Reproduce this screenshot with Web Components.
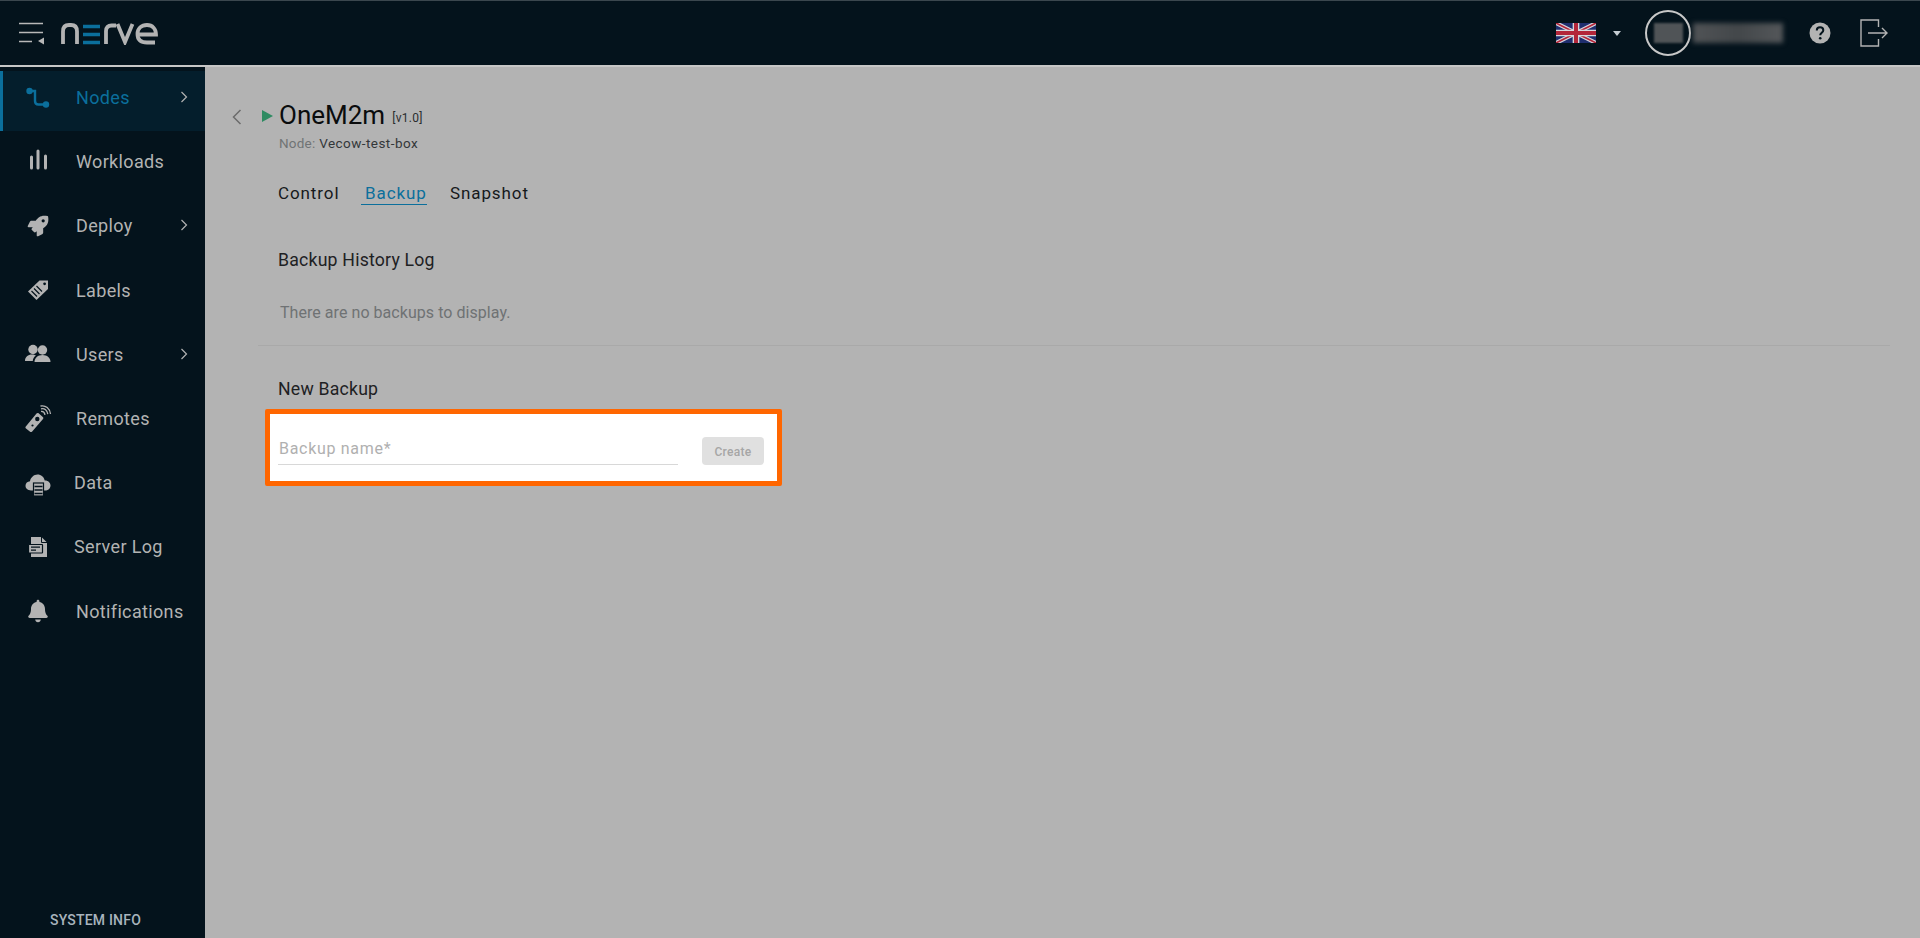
<!DOCTYPE html>
<html lang="en">
<head>
<meta charset="utf-8">
<title>OneM2m backup</title>
<style>
  html, body { margin: 0; height: 100%; background: #b3b3b3; }
  body { font-family: Roboto, "Liberation Sans", sans-serif; overflow: hidden; }
</style>
</head>
<body>
<nerve-app>
  <nerve-header slot="header"></nerve-header>
  <nerve-sidebar slot="sidebar">
    <nav-item icon="nodes" active chevron>Nodes</nav-item>
    <nav-item icon="workloads">Workloads</nav-item>
    <nav-item icon="deploy" chevron>Deploy</nav-item>
    <nav-item icon="labels">Labels</nav-item>
    <nav-item icon="users" chevron>Users</nav-item>
    <nav-item icon="remotes">Remotes</nav-item>
    <nav-item icon="data" shift>Data</nav-item>
    <nav-item icon="log" shift>Server Log</nav-item>
    <nav-item icon="bell">Notifications</nav-item>
  </nerve-sidebar>
  <backup-page slot="main"></backup-page>
</nerve-app>

<script>
const ICONS = {
    nodes: '<svg viewBox="0 0 28 28" width="28" height="28"><path d="M5 7h6v10c0 2 1 3.500 3.500 3.500H22" fill="none" stroke="#0b6f9c" stroke-width="2.400"/><circle cx="5.500" cy="7" r="3.200" fill="#0b6f9c"/><circle cx="22" cy="20.500" r="3.200" fill="#0b6f9c"/></svg>',
    workloads: '<svg viewBox="0 0 28 28" width="28" height="28" fill="#b3b3b3"><rect x="6" y="7.500" width="3" height="14" rx="1.500"/><rect x="12.500" y="1.500" width="3" height="20" rx="1.500"/><rect x="20" y="6.500" width="3" height="15" rx="1.500"/></svg>',
    deploy: '<svg viewBox="-90 -90 692 692" width="28" height="28" fill="#b3b3b3"><path d="M505.12 19.09c-1.19-5.53-6.66-11-12.21-12.19C460.72 0 435.51 0 410.41 0 307.18 0 245.27 55.2 199.05 128H94.84c-16.35.02-35.56 11.88-42.89 26.48L2.52 253.3A28.4 28.4 0 0 0 0 264a24 24 0 0 0 24 24h103.81l-22.47 22.47c-11.37 11.36-13 32.26 0 45.25l50.9 50.9c11.16 11.19 32.16 13.16 45.28 0L224 384.16V488a24 24 0 0 0 24 24 28.56 28.56 0 0 0 10.71-2.52l98.73-49.39c14.63-7.3 26.51-26.5 26.51-42.86V312.8c72.6-46.31 128.03-108.41 128.03-211.1.1-25.2.1-50.4-6.86-82.61zM384.04 168a40 40 0 1 1 40.01-40 40 40 0 0 1-40.01 40z"/></svg>',
    labels: '<svg viewBox="0 0 28 28" width="28" height="28"><path d="M15.500 4.500H24V13L12.500 24 4 15.500z" fill="#b3b3b3"/><circle cx="20.600" cy="7.800" r="1.400" fill="#04131c"/><path d="M7.500 15l5.500 5.500M10 12.500l5.500 5.500M12.500 10l5.500 5.500" stroke="#04131c" stroke-width="1.200"/></svg>',
    users: '<svg viewBox="0 0 28 28" width="28" height="28" fill="#b3b3b3"><circle cx="9" cy="9.500" r="4.700"/><circle cx="18.500" cy="10" r="4.700"/><path d="M1 21c0-4 3-6.500 7-6.500 1.600 0 3 .4 4 1.100-2 1.300-3.200 3.400-3.200 5.400z"/><path d="M10.500 22c0-4.200 3.400-7 8-7s8 2.800 8 7z"/></svg>',
    remotes: '<svg viewBox="0 0 28 28" width="28" height="28"><path d="M1.800 22.500L12.500 9.500c.6-.7 1.400-.8 2.100-.2l4.200 3.700c.7.600.7 1.300.2 2L8.200 27.500c-.6.700-1.400.8-2.100.2l-4.100-3.300c-.7-.6-.8-1.200-.2-1.900z" fill="#b3b3b3"/><circle cx="13.300" cy="15" r="2.200" fill="#04131c"/><circle cx="8.500" cy="21.500" r="1.100" fill="#04131c"/><g fill="none" stroke="#b3b3b3" stroke-width="1.300"><path d="M17 7.500c2.200-.3 3.600 1 4 3.300"/><path d="M17 4.800c3.700-.8 6.300 1.500 6.800 5.300"/><path d="M16.500 2c5.300-1 9.300 2.300 10 8"/></g></svg>',
    data: '<svg viewBox="0 0 28 28" width="28" height="28"><path d="M7 21.500c-3 0-5.500-2-5.500-4.700 0-2.500 2-4.400 4.500-4.500C6.700 8.300 10 5.500 13.500 5.500c3.600 0 6.500 2.500 7.200 6 3.200-.2 5.800 2 5.800 5s-2.500 5-5.500 5z" fill="#b3b3b3"/><rect x="9.500" y="14" width="10" height="13" fill="#b3b3b3" stroke="#04131c" stroke-width="1.200"/><path d="M10.500 17.500h8M10.500 21h8M10.500 24.500h8" stroke="#04131c" stroke-width="1.300"/></svg>',
    log: '<svg viewBox="0 0 28 28" width="28" height="28"><path d="M7 4h10.500L23 9.500V24H7z" fill="#b3b3b3"/><path d="M17.500 4v5.500H23" fill="none" stroke="#04131c" stroke-width="1"/><rect x="4.500" y="11.500" width="14" height="8.500" rx=".5" fill="#b3b3b3" stroke="#04131c" stroke-width="1.200"/><path d="M7 14.200h9M7 17.200h5" stroke="#04131c" stroke-width="1.300"/></svg>',
    bell: '<svg viewBox="-60 -64 568 640" width="28" height="28" fill="#b3b3b3"><path d="M224 512c35.32 0 63.97-28.65 63.97-64H160.03c0 35.35 28.65 64 63.97 64zm215.39-149.71c-19.32-20.76-55.47-51.99-55.47-154.29 0-77.7-54.48-139.9-127.94-155.16V32c0-17.67-14.32-32-31.98-32s-31.98 14.33-31.98 32v20.84C118.56 68.1 64.08 130.3 64.08 208c0 102.3-36.15 133.53-55.47 154.29-6 6.45-8.66 14.16-8.61 21.71.11 16.4 12.98 32 32.1 32h383.8c19.12 0 32-15.6 32.1-32 .05-7.55-2.61-15.27-8.61-21.71z"/></svg>'
};

class NerveApp extends HTMLElement {
    constructor() {
        super();
        this.attachShadow({ mode: 'open' });
        this.shadowRoot.innerHTML = `
            <style>
                :host { display: flex; flex-direction: column; height: 938px; }
                .body { flex: 1; display: flex; min-height: 0; }
                ::slotted(backup-page) { flex: 1; min-width: 0; }
            </style>
            <slot name="header"></slot>
            <div class="body">
                <slot name="sidebar"></slot>
                <slot name="main"></slot>
            </div>
        `;
    }
}

class NerveHeader extends HTMLElement {
    constructor() {
        super();
        this.attachShadow({ mode: 'open' });
        this.shadowRoot.innerHTML = `
            <style>
                :host {
                    display: flex;
                    align-items: center;
                    height: 64px;
                    background: #04131c;
                    border-top: 1px solid #3b474e;
                    border-bottom: 2px solid #c6c6c6;
                    box-sizing: content-box;
                }
                .burger { margin-left: 19px; }
                .logo { margin-left: 16px; margin-top: 2px; }
                .right { margin-left: auto; display: flex; align-items: center; }
                .flag { display: block; }
                .caret {
                    width: 0; height: 0;
                    margin-left: 17px;
                    border-left: 4.5px solid transparent;
                    border-right: 4.5px solid transparent;
                    border-top: 5px solid #c5ccd2;
                }
                .avatar {
                    position: relative;
                    width: 42px; height: 42px;
                    margin-left: 24px;
                    border: 2px solid #c8c8c8;
                    border-radius: 50%;
                }
                .avatar i {
                    position: absolute; left: 7px; top: 11px;
                    width: 29px; height: 20px;
                    background: #505457;
                    filter: blur(1.2px);
                }
                .name {
                    width: 90px; height: 20px;
                    margin-left: 2px;
                    background: linear-gradient(90deg, #505356, #43474a 50%, #54575a);
                    filter: blur(2.5px);
                }
                .help { margin-left: 26px; display: block; }
                .logout { margin-left: 29px; margin-right: 32px; display: block; }
            </style>
            <svg class="burger" width="26" height="24" viewBox="0 0 26 24">
                <path d="M0 2.500h24M0 11.500h24M0 20.500h13" stroke="#b8b8b8" stroke-width="1.300" fill="none"/>
                <path d="M25 16.500v7l-6-3.500z" fill="#b8b8b8"/>
            </svg>
            <svg class="logo" width="98" height="22" viewBox="0 0 98 22" fill="none" stroke-width="3.800">
                <path d="M2 21V8.500C2 4.500 4 2 8 2h2c4 0 6 2.500 6 6.500V21" stroke="#b3b3b3"/>
                <path d="M22 3.500h17M22 11.500h17M22 19.500h17" stroke="#0b6f9c" stroke-width="3.500"/>
                <path d="M45 21V8c0-3.500 2-5.500 5.500-5.500H55" stroke="#b3b3b3"/>
                <path d="M56.500 1l7.500 18 7.500-18" stroke="#b3b3b3"/>
                <path d="M76 11.500h19c0-5.500-3.500-9.500-9-9.500s-9.500 3.500-9.500 9 3.500 8.500 9.500 8.500h8" stroke="#b3b3b3"/>
            </svg>
            <div class="right">
                <svg class="flag" width="40" height="20" viewBox="0 0 60 30">
                    <rect width="60" height="30" fill="#1f2e6e"/>
                    <path d="M0 0l60 30M60 0L0 30" stroke="#d6d6dc" stroke-width="6"/>
                    <path d="M0 0l60 30M60 0L0 30" stroke="#b3263a" stroke-width="2.400"/>
                    <path d="M30 0v30M0 15h60" stroke="#d6d6dc" stroke-width="10"/>
                    <path d="M30 0v30M0 15h60" stroke="#b3263a" stroke-width="6"/>
                </svg>
                <div class="caret"></div>
                <div class="avatar"><i></i></div>
                <div class="name"></div>
                <svg class="help" width="22" height="22" viewBox="0 0 22 22">
                    <circle cx="11" cy="11" r="10.500" fill="#b3b3b3"/>
                    <path d="M7.800 8.500c0-2 1.400-3.200 3.300-3.200s3.200 1.200 3.200 2.900c0 2.500-3.100 2.500-3.100 5" fill="none" stroke="#04131c" stroke-width="2"/>
                    <circle cx="11.200" cy="16.200" r="1.300" fill="#04131c"/>
                </svg>
                <svg class="logout" width="28" height="28" viewBox="0 0 28 28" fill="none" stroke="#b3b3b3" stroke-width="1.400">
                    <path d="M18.500 8V1H1v26h17.500v-7"/>
                    <path d="M8 14h19M22 9l5 5-5 5"/>
                </svg>
            </div>
        `;
    }
}

class NerveSidebar extends HTMLElement {
    constructor() {
        super();
        this.attachShadow({ mode: 'open' });
        this.shadowRoot.innerHTML = `
            <style>
                :host {
                    display: flex;
                    flex-direction: column;
                    width: 205px;
                    flex: none;
                    box-sizing: border-box;
                    padding-top: 4px;
                    background: #04131c;
                }
                nav { display: flex; flex-direction: column; gap: 4.200px; flex: 1; }
                .info {
                    height: 36px;
                    line-height: 36px;
                    text-align: center;
                    font-size: 14px;
                    font-weight: 500;
                    letter-spacing: .2px;
                    color: #a9b4bd;
                    padding-right: 14px;
                }
            </style>
            <nav><slot></slot></nav>
            <div class="info">SYSTEM INFO</div>
        `;
    }
}

class NavItem extends HTMLElement {
    constructor() {
        super();
        this.attachShadow({ mode: 'open' });
        const icon = ICONS[this.getAttribute('icon')] || '';
        const chevron = this.hasAttribute('chevron')
            ? '<svg class="chev" width="8" height="12" viewBox="0 0 8 12"><path d="M1.500 1l5 5-5 5" fill="none" stroke="#b3b3b3" stroke-width="1.200"/></svg>'
            : '';
        this.shadowRoot.innerHTML = `
            <style>
                :host {
                    display: flex;
                    align-items: center;
                    height: 60px;
                    box-sizing: border-box;
                    padding: 0 0 7px 24px;
                    font-size: 18px;
                    color: #b3b3b3;
                    position: relative;
                }
                :host([active]) {
                    background: #041e2c;
                    color: #0b6f9c;
                    border-left: 3px solid #0b6f9c;
                    padding-left: 21px;
                }
                :host([shift]) .label { margin-left: 22px; }
                .icon { width: 28px; height: 28px; flex: none; }
                .icon svg { display: block; }
                .label { margin-left: 24px; letter-spacing: .35px; }
                .chev { position: absolute; left: 180px; top: 20px; }
                :host([active]) .chev { left: 177px; }
            </style>
            <span class="icon">${icon}</span>
            <span class="label"><slot></slot></span>
            ${chevron}
        `;
    }
}

class TabBar extends HTMLElement {
    constructor() {
        super();
        this.attachShadow({ mode: 'open' });
        this.shadowRoot.innerHTML = `
            <style>
                :host { display: flex; margin-left: 20px; height: 24px; font-size: 17px; letter-spacing: .9px; color: #16191b; }
                span { display: block; line-height: 24px; height: 24px; box-sizing: border-box; }
                .control { width: 61px; }
                .active { width: 66px; padding-left: 4px; color: #0b6f9c; border-bottom: 1.500px solid #0b6f9c; margin: 0 22px; }
                .snapshot { margin-left: 1px; }
            </style>
            <span class="control">Control</span>
            <span class="active">Backup</span>
            <span class="snapshot">Snapshot</span>
        `;
    }
}

class BackupForm extends HTMLElement {
    constructor() {
        super();
        this.attachShadow({ mode: 'open' });
        this.shadowRoot.innerHTML = `
            <style>
                :host {
                    display: flex;
                    align-items: flex-start;
                    width: 517px;
                    height: 77px;
                    box-sizing: border-box;
                    margin-left: 7px;
                    background: #fff;
                    border: 5px solid #ff6600;
                    border-radius: 2px;
                    padding-left: 8px;
                }
                .field {
                    width: 400px;
                    height: 51px;
                    box-sizing: border-box;
                    padding: 24px 0 0 1px;
                    border-bottom: 1px solid #d8d8d8;
                    font-size: 16px;
                    letter-spacing: .7px;
                    line-height: 22px;
                    color: #b0b0b0;
                }
                button {
                    margin: 23px 0 0 24px;
                    width: 62px;
                    height: 28px;
                    border: 0;
                    border-radius: 4px;
                    background: #e0e0e0;
                    color: #a6a6a6;
                    font: 500 12px Roboto, "Liberation Sans", sans-serif;
                    letter-spacing: .3px;
                    padding: 1px 0 0;
                }
            </style>
            <div class="field">Backup name*</div>
            <button type="button">Create</button>
        `;
    }
}

class BackupPage extends HTMLElement {
    constructor() {
        super();
        this.attachShadow({ mode: 'open' });
        this.shadowRoot.innerHTML = `
            <style>
                :host {
                    display: block;
                    box-sizing: border-box;
                    padding: 33px 30px 0 53px;
                    background: #b3b3b3;
                    color: #1a1d1f;
                }
                .title { display: flex; align-items: center; height: 30px; margin-left: -26px; }
                .back { display: block; margin-top: 4px; }
                .play { display: block; margin: 2px 0 0 20px; }
                h1 { margin: 0 0 0 6px; font-size: 26px; font-weight: 400; line-height: 30px; color: #0a0c0d; }
                .ver { margin: 5px 0 0 7px; font-size: 12px; color: #2a2d2f; letter-spacing: .3px; }
                .node { margin: 4px 0 0 21px; height: 18px; line-height: 18px; font-size: 13.500px; color: #333739; letter-spacing: .45px; }
                .node span { color: #707375; letter-spacing: .2px; }
                tab-bar { margin-top: 29px; }
                h2 { margin: 0 0 0 20px; font-size: 17.700px; font-weight: 400; line-height: 24px; color: #1e2123; letter-spacing: .2px; }
                .log { margin-top: 43px; }
                .empty { margin: 31px 0 0 22px; height: 20px; line-height: 20px; font-size: 16px; color: #6f7274; letter-spacing: .05px; }
                .rule { margin-top: 22px; height: 1px; background: #a9a9a9; }
                .new { margin-top: 31px; margin-bottom: 8px; }
            </style>
            <div class="title">
                <svg class="back" width="10" height="16" viewBox="0 0 10 16"><path d="M8.500 1L1.500 8l7 7" fill="none" stroke="#6b6b6b" stroke-width="1.500"/></svg>
                <svg class="play" width="11" height="12" viewBox="0 0 11 12"><path d="M0 0l11 6-11 6z" fill="#2e8b62"/></svg>
                <h1>OneM2m</h1>
                <span class="ver">[v1.0]</span>
            </div>
            <div class="node"><span>Node:</span> Vecow-test-box</div>
            <tab-bar></tab-bar>
            <h2 class="log">Backup History Log</h2>
            <div class="empty">There are no backups to display.</div>
            <div class="rule"></div>
            <h2 class="new">New Backup</h2>
            <backup-form></backup-form>
        `;
    }
}

customElements.define('nerve-app', NerveApp);
customElements.define('nerve-header', NerveHeader);
customElements.define('nerve-sidebar', NerveSidebar);
customElements.define('nav-item', NavItem);
customElements.define('tab-bar', TabBar);
customElements.define('backup-form', BackupForm);
customElements.define('backup-page', BackupPage);
</script>
</body>
</html>
